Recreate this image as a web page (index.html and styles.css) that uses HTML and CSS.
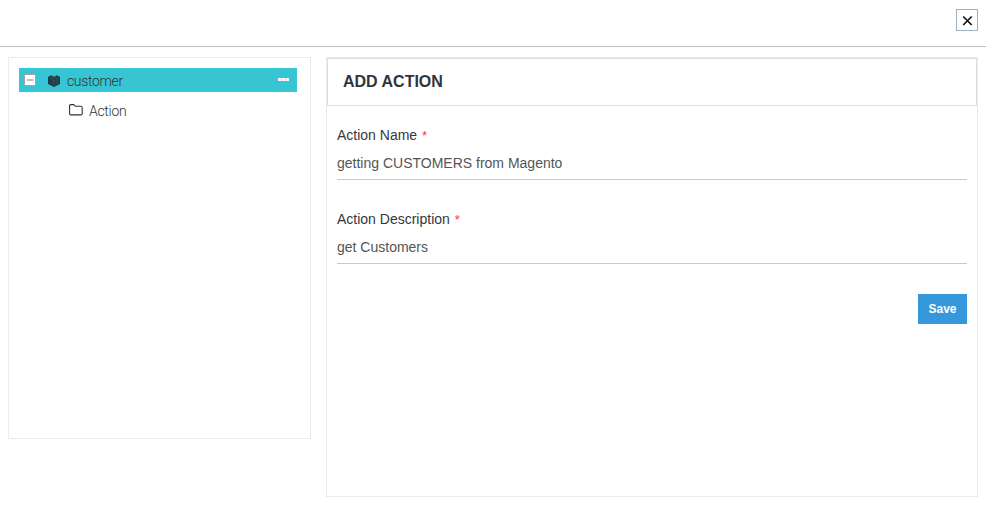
FILE: index.html
```html
<!DOCTYPE html>
<html lang="en">
<head>
<meta charset="utf-8">
<title>Add Action</title>
<link rel="stylesheet" href="styles.css">
</head>
<body>
<header class="topbar">
  <button class="close" aria-label="Close"><svg width="20" height="20" viewBox="0 0 20 20"><path d="M6.200 6.500l8.500 8.500M14.700 6.500l-8.500 8.500" stroke="#111" stroke-width="1.7" fill="none"/></svg></button>
</header>
<main class="layout">
  <aside class="tree">
    <div class="node node-root">
      <svg class="toggle" width="12" height="12" viewBox="0 0 12 12"><rect x=".5" y=".5" width="11" height="11" rx="1" fill="#fff" stroke="#a99f9b"/><path d="M3 6h6.500" stroke="#aaa39f" stroke-width="1.4"/></svg>
      <svg class="cube" width="12" height="12" viewBox="0 0 12 12"><path d="M0 2L3 .3l3 1.500L9 .3l3 1.700v7L6 12 0 9z" fill="#243a40"/><path d="M1 3l5 2.600L11 3M6 5.600V11M3 1.500l3 1.700 3-1.700M3 7.500v2M8 5.500l2 1M8 9l2-2" stroke="#28737d" stroke-width=".6" fill="none"/></svg>
      <span class="label">customer</span>
      <svg class="more" width="11" height="3" viewBox="0 0 11 3"><path d="M0 0h3v3H0zM4 0h3v3H4zM8 0h3v3H8z" fill="#f4fcfd"/><path d="M3 0h1v3H3zM7 0h1v3H7z" fill="#b5e9ee"/></svg>
    </div>
    <div class="node node-child">
      <svg class="folder" width="14" height="12" viewBox="0 0 14 12"><path d="M.6 9.800V1.800q0-1.200 1.200-1.200h3l1.500 1.700h5.600q1.300 0 1.300 1.200v6.300q0 1.100-1.200 1.100H1.800Q.6 10.900.6 9.800z" fill="none" stroke="#333" stroke-width="1.1"/></svg>
      <span class="label">Action</span>
    </div>
  </aside>
  <section class="panel">
    <h1 class="panel-title">ADD ACTION</h1>
    <form class="form">
      <div class="field">
        <label for="name">Action Name <span class="required">*</span></label>
        <input id="name" type="text" value="getting CUSTOMERS from Magento">
      </div>
      <div class="field">
        <label for="description">Action Description <span class="required">*</span></label>
        <input id="description" type="text" value="get Customers">
      </div>
      <button class="save" type="button">Save</button>
    </form>
  </section>
</main>
</body>
</html>
```
FILE: styles.css
```css
* { box-sizing: border-box; }
body {
  margin: 0;
  background: #fff;
  color: #333;
  font: 14px/20px "Liberation Sans", Arial, sans-serif;
}
.topbar {
  display: flex;
  justify-content: flex-end;
  height: 47px;
  padding: 9px 8px 0 0;
  border-bottom: 1px solid #bfbfbf;
}
.close {
  width: 22px;
  height: 22px;
  padding: 0;
  border: 1px solid #9fb0bf;
  background: #fff;
}
.close svg { display: block; }
.layout {
  display: flex;
  align-items: flex-start;
  gap: 15px;
  padding: 10px 8px;
}
.tree {
  width: 303px;
  height: 382px;
  padding: 10px 13px 0 10px;
  border: 1px solid #e7ecf1;
}
.node {
  display: flex;
  align-items: center;
  height: 24px;
  color: #333;
  font: 300 14px/24px Roboto, sans-serif;
}
.node-root {
  padding: 0 8px 0 5px;
  background: #36c6d3;
}
.node-root .label {
  margin-left: 7px;
  padding-top: 2px;
  letter-spacing: -0.35px;
}
.cube { margin: 1px 0 0 12px; }
.more { margin: 0 0 1px auto; }
.node-child {
  margin-top: 6px;
  padding-left: 50px;
}
.node-child .label {
  margin-left: 6px;
  padding-top: 2px;
  letter-spacing: -0.3px;
}
.panel {
  width: 652px;
  height: 440px;
  border: 1px solid #e7ecf1;
}
.panel-title {
  height: 48px;
  margin: 0;
  padding-left: 15px;
  border: 1px solid #dcdee0;
  color: #2f353b;
  font-size: 16px;
  font-weight: 700;
  line-height: 46px;
}
.form {
  display: flex;
  flex-direction: column;
  padding: 19px 10px 0;
}
.field {
  display: flex;
  flex-direction: column;
  margin-bottom: 29px;
}
.field label {
  height: 20px;
  color: #34383d;
}
.required {
  margin-left: 1px;
  color: #f33;
  font-size: 13px;
  line-height: 1;
}
.field input {
  height: 35px;
  padding: 1px 0 0;
  border: 0;
  border-bottom: 1px solid #c2cad8;
  outline: 0;
  color: #555;
  font: inherit;
}
.save {
  align-self: flex-end;
  width: 49px;
  height: 30px;
  margin-top: 1px;
  padding: 0;
  border: 0;
  background: #3598dc;
  color: #fff;
  font: 700 12px/30px "Liberation Sans", Arial, sans-serif;
}
```
